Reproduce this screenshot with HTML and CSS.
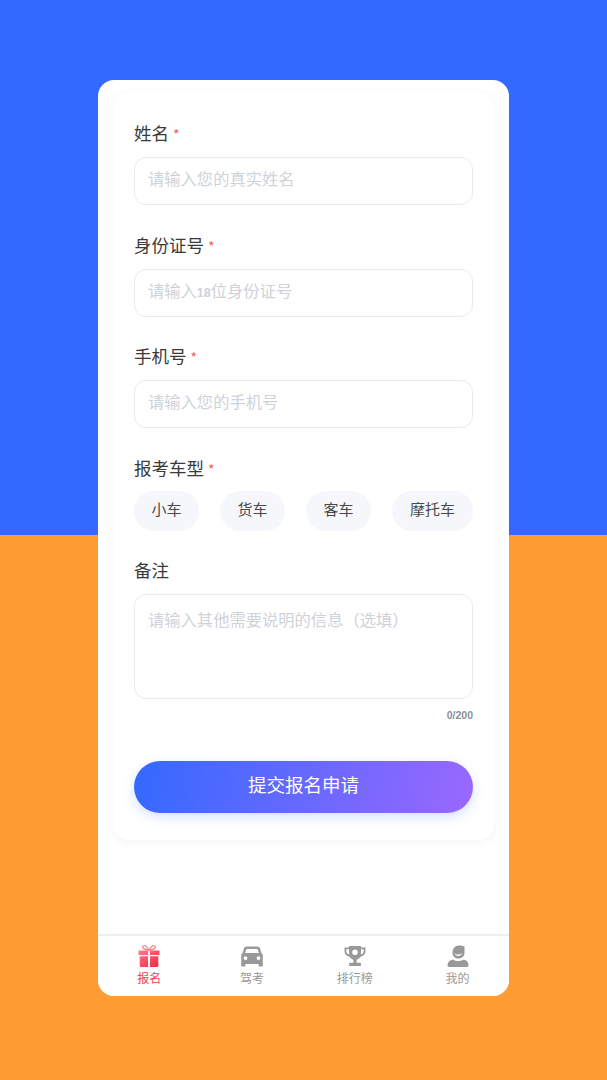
FILE: index.html
```html
<!DOCTYPE html>
<html lang="zh-CN">
<head>
  <meta charset="UTF-8" />
  <meta name="viewport" content="width=device-width, initial-scale=1.0">
  <title>报名</title>
  <link rel="stylesheet" href="styles.css">
</head>
<body>
  <div class="phone">
    <main class="content">
      <form class="card">
        <div class="field">
          <div class="label">姓名 <span class="req">*</span></div>
          <div class="input">请输入您的真实姓名</div>
        </div>
        <div class="field">
          <div class="label">身份证号 <span class="req">*</span></div>
          <div class="input">请输入<b class="num">18</b>位身份证号</div>
        </div>
        <div class="field">
          <div class="label">手机号 <span class="req">*</span></div>
          <div class="input">请输入您的手机号</div>
        </div>
        <div class="field field-chips">
          <div class="label">报考车型 <span class="req">*</span></div>
          <div class="chips">
            <span class="chip">小车</span>
            <span class="chip">货车</span>
            <span class="chip">客车</span>
            <span class="chip">摩托车</span>
          </div>
        </div>
        <div class="field field-last">
          <div class="label">备注</div>
          <div class="input textarea">请输入其他需要说明的信息（选填）</div>
          <div class="counter">0/200</div>
        </div>
        <button class="submit" type="button">提交报名申请</button>
      </form>
    </main>

    <!-- 底部导航 -->
    <nav class="tabbar">
      <a class="tab active">
        <svg class="tab-icon" viewBox="0 0 24 24">
          <defs>
            <linearGradient id="gift" x1="0" y1="0" x2="1" y2="1">
              <stop offset="0" stop-color="#ff7d8c"/>
              <stop offset="1" stop-color="#f0233f"/>
            </linearGradient>
          </defs>
          <path d="M12 6.200C10 2.200 7.600 1 6.200 2s-.6 3.600 5.800 4.200zm0 0c2-4 4.400-5.200 5.800-4.200s.6 3.600-5.800 4.200z" fill="none" stroke="#f9868f" stroke-width="1.300"/>
          <path d="M1.500 6.500h9.500v4.500H1.500zM13 6.500h9.500v4.500H13zM2.700 12.300H11V23H4a1.300 1.300 0 0 1-1.300-1.300zM13 12.300h8.300v9.400A1.300 1.300 0 0 1 20 23h-7z" fill="url(#gift)"/>
        </svg>
        <span>报名</span>
      </a>
      <a class="tab">
        <svg class="tab-icon" viewBox="0 0 24 24">
          <path fill-rule="evenodd" fill="#999" d="M6.500 2.500h11c1.200 0 2.100.7 2.500 1.800L21.400 9c.9.500 1.400 1.300 1.400 2.300V19v2.500a1 1 0 0 1-1 1h-2.200a1 1 0 0 1-1-1V20H5.400v1.500a1 1 0 0 1-1 1H2.200a1 1 0 0 1-1-1V11.300c0-1 .5-1.800 1.400-2.300L4 4.300c.4-1.100 1.300-1.800 2.500-1.800zM7 5c-.4 0-.7.200-.8.600L5.100 9h13.800l-1.100-3.400c-.1-.4-.4-.6-.8-.6zM5.500 12.200a1.900 1.900 0 1 0 0 3.800 1.900 1.900 0 0 0 0-3.800zm13 0a1.900 1.900 0 1 0 0 3.800 1.900 1.900 0 0 0 0-3.800z"/>
        </svg>
        <span>驾考</span>
      </a>
      <a class="tab">
        <svg class="tab-icon" viewBox="0 0 24 24">
          <path fill-rule="evenodd" fill="#999" d="M6 2h12v1.500h4.500v3.800c0 2.900-1.800 4.900-5 5.500-1 1.500-2.300 2.500-3.900 2.900v3h3.400c.5 0 .9.400.9.900V22H6.100v-2.400c0-.5.400-.9.900-.9h3.400v-3c-1.600-.4-2.900-1.400-3.900-2.900-3.200-.6-5-2.600-5-5.500V3.500H6zM3.300 5.300v2c0 1.600.9 2.800 3 3.300C6.100 9.900 6 9 6 8V5.300zM18 5.300V8c0 1-.1 1.900-.3 2.600 2.100-.5 3-1.700 3-3.300v-2zM12 5.500a2.800 2.800 0 1 0 0 5.600 2.800 2.800 0 0 0 0-5.600z"/>
        </svg>
        <span>排行榜</span>
      </a>
      <a class="tab">
        <svg class="tab-icon" viewBox="0 0 24 24">
          <path fill="#999" d="M13 1.500c2.300 0 4.500.5 5.500 1v6.700c0 3.100-2.800 5.300-6.300 5.300C8.800 14.500 6.500 12 6.500 9 6.500 4.500 9 1.500 13 1.500zM8.500 9.300c.8 1.800 2.100 2.700 3.800 2.700 1.800 0 3.100-.9 3.900-2.700-1.200.9-2.500 1.300-3.900 1.300S9.700 10.200 8.500 9.300zM7 15.500c1.500 1 3.300 1.500 5.200 1.500s3.800-.5 5.200-1.500c3.400.7 5.100 3 5.100 5.800 0 .9-.6 1.700-1.500 1.700H3.200c-.9 0-1.700-.8-1.700-1.700 0-2.800 2-5.100 5.500-5.800z"/>
        </svg>
        <span>我的</span>
      </a>
    </nav>
  </div>
</body>
</html>
```

FILE: styles.css
```css
* { box-sizing: border-box; }
body {
  margin: 0;
  height: 1080px;
  overflow: hidden;
  background: linear-gradient(180deg, #3369ff 0, #3369ff 535px, #ff9c33 535px, #ff9c33 100%);
  font-family: 'Noto Sans CJK SC', 'Liberation Sans', sans-serif;
  color: #333;
}
.phone {
  width: 411px;
  height: 916px;
  margin: 80px 0 0 98px;
  background: #fff;
  border-radius: 16px;
  overflow: hidden;
  display: flex;
  flex-direction: column;
}
.content {
  flex: 1;
  padding: 12px 15px 0;
}
.card {
  height: 748px;
  padding: 29px 21px 0;
  border-radius: 16px;
  background: #fff;
  box-shadow: 0 2px 10px rgba(40, 50, 90, 0.05);
}
.field { margin-bottom: 27.5px; }
.field-chips { margin-bottom: 27px; }
.field-last { margin-bottom: 0; }
.label {
  height: 24px;
  line-height: 24px;
  margin-bottom: 12px;
  font-size: 17.500px;
  color: #3a3a3a;
}
.req {
  color: #f25c5c;
  font-size: 14px;
}
.input {
  height: 48px;
  padding: 0 13px;
  border: 1px solid #e9ebf0;
  border-radius: 12px;
  font-size: 16.300px;
  line-height: 40px;
  color: #cfd2d8;
}
.num {
  font-size: 12.500px;
  font-family: 'Liberation Sans', sans-serif;
}
.textarea {
  height: 105px;
  line-height: 48px;
}
.counter {
  margin-top: 9px;
  text-align: right;
  font-size: 10.500px;
  line-height: 14px;
  font-weight: bold;
  font-family: 'Liberation Sans', sans-serif;
  color: #8d8f96;
}
.chips {
  display: flex;
  justify-content: space-between;
  margin-top: -1px;
}
.chip {
  width: 65px;
  height: 40px;
  line-height: 36px;
  text-align: center;
  border-radius: 20px;
  background: #f6f7fb;
  font-size: 15px;
  color: #4a4a4a;
}
.chip:last-child { width: 81px; }
.submit {
  display: block;
  width: 100%;
  height: 52px;
  margin-top: 39px;
  padding: 0 0 5px;
  border: none;
  border-radius: 26px;
  background: linear-gradient(105deg, #3369ff 0%, #9a68ff 100%);
  box-shadow: 0 4px 12px rgba(51, 105, 255, 0.2);
  color: #fff;
  font-family: inherit;
  font-size: 18.500px;
}
.tabbar {
  height: 62px;
  display: flex;
  border-top: 2px solid #efeff1;
  background: #fff;
}
.tab {
  flex: 1;
  display: flex;
  flex-direction: column;
  align-items: center;
  padding-top: 8px;
  font-size: 12px;
  line-height: 17px;
  color: #999;
}
.tab.active { color: #f2405a; }
.tab-icon {
  width: 24px;
  height: 24px;
  margin-bottom: 1px;
}
```
